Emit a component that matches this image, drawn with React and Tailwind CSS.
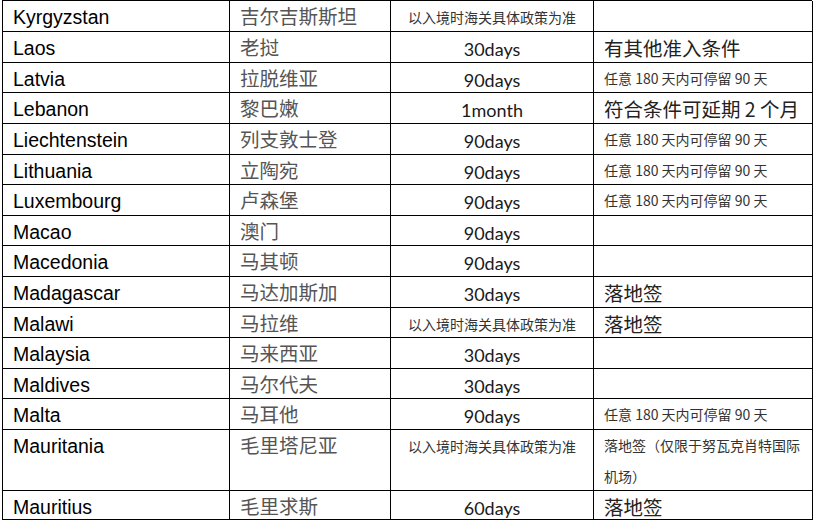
const SMALL = "以入境时海关具体政策为准";
const STAY = "任意 180 天内可停留 90 天";

// row heights copied from the scan, the Mauritania row wraps to two lines
const rows = [
  { en: "Kyrgyzstan", zh: "吉尔吉斯斯坦", days: SMALL, note: "", h: "h-[31px]" },
  { en: "Laos", zh: "老挝", days: "30days", note: "有其他准入条件", big: true, h: "h-[31px]" },
  { en: "Latvia", zh: "拉脱维亚", days: "90days", note: STAY, h: "h-[30px]" },
  { en: "Lebanon", zh: "黎巴嫩", days: "1month", note: "符合条件可延期 2 个月", big: true, h: "h-[31px]" },
  { en: "Liechtenstein", zh: "列支敦士登", days: "90days", note: STAY, h: "h-[31px]" },
  { en: "Lithuania", zh: "立陶宛", days: "90days", note: STAY, h: "h-[30px]" },
  { en: "Luxembourg", zh: "卢森堡", days: "90days", note: STAY, h: "h-[31px]" },
  { en: "Macao", zh: "澳门", days: "90days", note: "", h: "h-[30px]" },
  { en: "Macedonia", zh: "马其顿", days: "90days", note: "", h: "h-[31px]" },
  { en: "Madagascar", zh: "马达加斯加", days: "30days", note: "落地签", big: true, h: "h-[31px]" },
  { en: "Malawi", zh: "马拉维", days: SMALL, note: "落地签", big: true, h: "h-[30px]" },
  { en: "Malaysia", zh: "马来西亚", days: "30days", note: "", h: "h-[31px]" },
  { en: "Maldives", zh: "马尔代夫", days: "30days", note: "", h: "h-[30px]" },
  { en: "Malta", zh: "马耳他", days: "90days", note: STAY, h: "h-[31px]" },
  { en: "Mauritania", zh: "毛里塔尼亚", days: SMALL, note: "落地签（仅限于努瓦克肖特国际机场）", h: "h-[61px]" },
  { en: "Mauritius", zh: "毛里求斯", days: "60days", note: "落地签", big: true, h: "h-[29px]" },
];

const cjk = "font-['Noto_Sans_CJK_SC',sans-serif]";

function DaysCell({ value }) {
  if (value === SMALL) {
    return <div className={`${cjk} pt-[7px] text-center text-[14px] leading-[18px] text-[#333]`}>{value}</div>;
  }
  return (
    <div className="pt-[2px] text-center font-['Lato',sans-serif] text-[18px] leading-[30px] text-[#1a1a1a]">
      {value}
    </div>
  );
}

function NoteCell({ value, big }) {
  if (!value) return null;
  if (big) {
    return <div className={`${cjk} pl-[10px] pt-[1px] text-[19.5px] leading-[30px] text-[#222]`}>{value}</div>;
  }
  return <div className={`${cjk} pl-[10px] pr-[8px] text-[14px] leading-[31px] text-[#333]`}>{value}</div>;
}

export default function App() {
  return (
    <div className="h-[523px] w-[813px] overflow-hidden bg-white">
      <div className="ml-[2px] grid w-[810px] grid-cols-[227px_161px_203px_219px] border-l border-t border-black">
        {rows.map((r) => (
          <div key={r.en} className="contents">
            <div
              className={`${r.h} border-b border-r border-black pl-[10px] pt-[1px] font-['Liberation_Sans',Arial,sans-serif] text-[19.5px] leading-[30px] text-black`}
            >
              {r.en}
            </div>
            <div className={`${r.h} ${cjk} border-b border-r border-black pl-[10px] text-[19.5px] leading-[30px] text-[#555]`}>
              {r.zh}
            </div>
            <div className={`${r.h} border-b border-r border-black`}>
              <DaysCell value={r.days} />
            </div>
            <div className={`${r.h} border-b border-r border-black`}>
              <NoteCell value={r.note} big={r.big} />
            </div>
          </div>
        ))}
      </div>
    </div>
  );
}
